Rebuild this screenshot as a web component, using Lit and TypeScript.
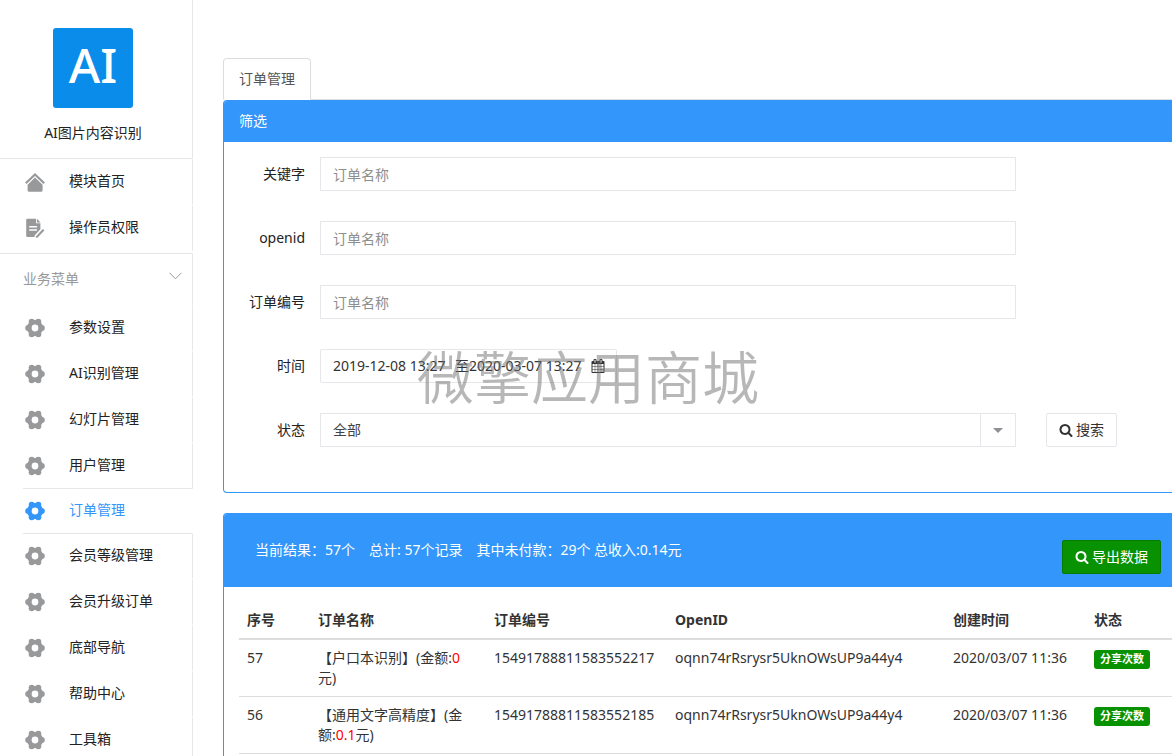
import { LitElement, html, css, svg } from "lit";
import { customElement } from "lit/decorators.js";
import { classMap } from "lit/directives/class-map.js";

const ICONS = {
  home: svg`<path d="M.8 11.200 10 2.400l9.200 8.800" fill="none" stroke="currentColor" stroke-width="2.200"/><path d="M10 5.600l7.600 7.200v5.400a1.600 1.600 0 0 1-1.600 1.600H4.200a1.600 1.600 0 0 1-1.600-1.600v-5.400z"/>`,
  doc: svg`<path fill-rule="evenodd" d="M2.500 .800h8.500v4.400h4.400v6l-5.800 6.200v1.600H2.500a1.300 1.300 0 0 1-1.300-1.300V2.100A1.300 1.300 0 0 1 2.500 .800zM4.200 8v1.400h7.800V8zM4.200 11.300v1.400h7.800v-1.400z"/><path d="M11.900 .800l3.600 3.600h-3.600z"/><path d="M10.400 19l7.400-8 1.600 1.500-7.300 7.500z"/>`,
  gear: svg`<circle cx="10" cy="10" r="5.700" fill="none" stroke="currentColor" stroke-width="4.600"/><circle cx="3.200" cy="10" r="3"/><circle cx="16.800" cy="10" r="3"/><circle cx="6.700" cy="3.800" r="3"/><circle cx="13.300" cy="3.800" r="3"/><circle cx="6.700" cy="16.200" r="3"/><circle cx="13.300" cy="16.200" r="3"/>`,
};

const searchIcon = html`<svg class="fa" viewBox="0 0 1792 1792" aria-hidden="true"><path d="M1216 832q0-185-131.500-316.500t-316.500-131.500-316.500 131.500-131.500 316.500 131.500 316.500 316.500 131.500 316.500-131.500 131.500-316.500zm512 832q0 52-38 90t-90 38q-54 0-90-38l-343-342q-179 124-399 124-143 0-273.500-55.500t-225-150-150-225-55.500-273.500 55.500-273.500 150-225 225-150 273.500-55.500 273.500 55.500 225 150 150 225 55.500 273.500q0 220-124 399l343 343q37 37 37 90z"/></svg>`;

const calendarIcon = html`<svg class="fa" viewBox="0 0 1792 1792" aria-hidden="true"><path d="M192 1664h288v-288h-288v288zm352 0h320v-288h-320v288zm-352-352h288v-320h-288v320zm352 0h320v-320h-320v320zm-352-384h288v-288h-288v288zm736 736h320v-288h-320v288zm-384-736h320v-288h-320v288zm768 736h288v-288h-288v288zm-384-352h320v-320h-320v320zm-352-864v-288q0-13-9.500-22.500t-22.500-9.500h-64q-13 0-22.500 9.500t-9.500 22.500v288q0 13 9.500 22.500t22.500 9.500h64q13 0 22.500-9.500t9.500-22.500zm736 864h288v-320h-288v320zm-384-384h320v-288h-320v288zm384 0h288v-288h-288v288zm32-480v-288q0-13-9.500-22.500t-22.500-9.500h-64q-13 0-22.500 9.500t-9.500 22.500v288q0 13 9.500 22.500t22.500 9.500h64q13 0 22.500-9.500t9.500-22.500zm384-64v1280q0 52-38 90t-90 38h-1408q-52 0-90-38t-38-90v-1280q0-52 38-90t90-38h128v-96q0-66 47-113t113-47h64q66 0 113 47t47 113v96h384v-96q0-66 47-113t113-47h64q66 0 113 47t47 113v96h128q52 0 90 38t38 90z"/></svg>`;

interface MenuItem {
  label: string;
  icon: keyof typeof ICONS;
  active?: boolean;
}

interface Order {
  id: number;
  name: string;
  amount: string;
  orderNo: string;
  openid: string;
  created: string;
}

const TOP_MENU: MenuItem[] = [
  { label: "模块首页", icon: "home" },
  { label: "操作员权限", icon: "doc" },
];

const BUSINESS_MENU: MenuItem[] = [
  { label: "参数设置", icon: "gear" },
  { label: "AI识别管理", icon: "gear" },
  { label: "幻灯片管理", icon: "gear" },
  { label: "用户管理", icon: "gear" },
  { label: "订单管理", icon: "gear", active: true },
  { label: "会员等级管理", icon: "gear" },
  { label: "会员升级订单", icon: "gear" },
  { label: "底部导航", icon: "gear" },
  { label: "帮助中心", icon: "gear" },
  { label: "工具箱", icon: "gear" },
];

const ORDERS: Order[] = [
  { id: 57, name: "户口本识别", amount: "0", orderNo: "15491788811583552217", openid: "oqnn74rRsrysr5UknOWsUP9a44y4", created: "2020/03/07 11:36" },
  { id: 56, name: "通用文字高精度", amount: "0.1", orderNo: "15491788811583552185", openid: "oqnn74rRsrysr5UknOWsUP9a44y4", created: "2020/03/07 11:36" },
];

@customElement("side-menu")
class SideMenu extends LitElement {
  static styles = css`
    :host {
      display: block;
      flex: none;
      width: 193px;
      color: #222;
    }
    .brand {
      display: flex;
      flex-direction: column;
      align-items: center;
      box-sizing: border-box;
      padding: 28px 6px 15px 0;
      border-right: 1px solid #e7e7e7;
      border-bottom: 1px solid #e7e7e7;
    }
    .logo {
      width: 80px;
      height: 80px;
      border-radius: 3px;
      background: #0a8cea;
      color: #fff;
      font-size: 48px;
      font-weight: 500;
      line-height: 74px;
      text-align: center;
    }
    .brand-name {
      margin-top: 15px;
      line-height: 20px;
    }
    .group {
      border-bottom: 1px solid #e7e7e7;
      padding-bottom: 2px;
    }
    .item {
      display: flex;
      align-items: center;
      box-sizing: border-box;
      height: 46px;
      padding-left: 25px;
      gap: 24px;
      border: 1px solid transparent;
      border-width: 1px 1px 1px 0;
      border-right-color: #e7e7e7;
      color: inherit;
      text-decoration: none;
    }
    .item span {
      line-height: 20px;
      padding-bottom: 2px;
    }
    .icon {
      width: 20px;
      height: 20px;
      fill: currentColor;
      color: #98999b;
    }
    .item.active {
      position: relative;
      margin: -1px 0 -1px 23px;
      padding-left: 2px;
      border-color: #e7e7e7;
      border-right-color: transparent;
      color: #3296fa;
    }
    .active .icon {
      color: #3296fa;
    }
    .section {
      display: flex;
      align-items: center;
      justify-content: space-between;
      box-sizing: border-box;
      width: 100%;
      height: 51px;
      padding: 0 10px 2px 23px;
      border: 0;
      border-right: 1px solid #e7e7e7;
      background: none;
      color: #999;
      font: inherit;
    }
    .chevron {
      width: 13px;
      height: 8px;
      margin-bottom: 5px;
      fill: none;
      stroke: #999;
    }
  `;

  private renderItem(item: MenuItem) {
    return html`<a href="#" class=${classMap({ item: true, active: !!item.active })}>
      <svg class="icon" viewBox="0 0 20 20" aria-hidden="true">${ICONS[item.icon]}</svg>
      <span>${item.label}</span>
    </a>`;
  }

  render() {
    return html`
      <div class="brand">
        <div class="logo">AI</div>
        <div class="brand-name">AI图片内容识别</div>
      </div>
      <nav>
        <div class="group">${TOP_MENU.map((i) => this.renderItem(i))}</div>
        <button class="section" type="button">
          业务菜单
          <svg class="chevron" viewBox="0 0 13 8" aria-hidden="true"><path d="M.5 .8l6 6 6-6" /></svg>
        </button>
        ${BUSINESS_MENU.map((i) => this.renderItem(i))}
      </nav>
    `;
  }
}

@customElement("app-root")
class AppRoot extends LitElement {
  static styles = css`
    :host {
      display: flex;
      height: 100vh;
      overflow: hidden;
      background: #fff;
      color: #333;
      font: 14px/20px "Noto Sans", "Noto Sans CJK SC", sans-serif;
    }
    main {
      flex: 1;
      min-width: 0;
      padding: 58px 0 0 30px;
    }
    .tabs {
      display: flex;
      border-bottom: 1px solid #ddd;
    }
    .tab {
      margin-bottom: -1px;
      padding: 10px 15px;
      border: 1px solid #ddd;
      border-bottom-color: #fff;
      border-radius: 4px 4px 0 0;
      background: #fff;
      color: #555;
      text-decoration: none;
    }
    .panel {
      margin-bottom: 20px;
      border: 1px solid #3296fa;
      border-right: 0;
      border-radius: 4px 0 0 4px;
      overflow: hidden;
    }
    .panel-head {
      padding: 10px 15px 11px;
      background: #3296fa;
      color: #fff;
    }
    .filters {
      position: relative;
      padding: 15px 0 0 15px;
    }
    .row {
      display: grid;
      grid-template-columns: 66px minmax(0, 1fr) 126px;
      margin-bottom: 30px;
    }
    .row:last-of-type {
      margin-bottom: 45px;
    }
    .row label {
      padding: 7px 0;
      text-align: right;
      color: #222;
    }
    .field {
      margin: 0 30px 0 15px;
    }
    .control {
      box-sizing: border-box;
      display: block;
      width: 100%;
      height: 34px;
      padding: 0 12px;
      border: 1px solid #e7e7eb;
      border-radius: 0;
      background: #fff;
      color: #444;
      font: inherit;
      appearance: none;
      outline: 0;
    }
    .control::placeholder {
      color: #8e8e8e;
      opacity: 1;
    }
    .btn {
      display: inline-flex;
      align-items: center;
      box-sizing: border-box;
      height: 34px;
      padding: 0 12px;
      gap: 3px;
      border: 1px solid #e7e7eb;
      border-radius: 2px;
      background: #fff;
      color: #333;
      font: inherit;
      white-space: nowrap;
      justify-self: start;
    }
    .btn.range {
      min-width: 297px;
      padding-right: 11px;
      justify-content: space-between;
    }
    .btn.export {
      border-color: #077a00;
      background: #089100;
      color: #fff;
    }
    .fa {
      flex: none;
      width: 14px;
      height: 14px;
      fill: currentColor;
    }
    .select {
      position: relative;
    }
    .arrow {
      position: absolute;
      top: 0;
      right: 0;
      display: flex;
      align-items: center;
      justify-content: center;
      box-sizing: border-box;
      width: 36px;
      height: 34px;
      border: 1px solid #e7e7eb;
      pointer-events: none;
    }
    .arrow svg {
      width: 10px;
      height: 5px;
      fill: #8f9094;
    }
    .watermark {
      position: absolute;
      left: 193px;
      top: 205px;
      color: rgba(112, 112, 112, 0.5);
      font-size: 57px;
      line-height: 60px;
      font-weight: 350;
      white-space: nowrap;
      pointer-events: none;
    }
    .summary {
      display: flex;
      gap: 14px;
      align-items: flex-start;
      padding: 26px 11px 13px 31px;
      background: #3296fa;
      color: #fff;
    }
    .summary .btn {
      margin-left: auto;
    }
    .table-wrap {
      padding: 15px 0 15px 15px;
    }
    table {
      width: 100%;
      table-layout: fixed;
      border-collapse: separate;
      border-spacing: 0;
    }
    .c-id { width: 71px; }
    .c-name { width: 176px; }
    .c-no { width: 181px; }
    .c-open { width: 278px; }
    .c-time { width: 141px; }
    th,
    td {
      padding: 8px;
      text-align: left;
      vertical-align: top;
    }
    th {
      border-bottom: 2px solid #ddd;
    }
    td {
      border-bottom: 1px solid #ddd;
    }
    .amount {
      color: #f00;
    }
    .tag {
      display: inline-block;
      margin-top: 2px;
      padding: 0 6px 1px;
      border-radius: 3px;
      background: #089100;
      color: #fff;
      font-size: 11px;
      font-weight: 700;
      line-height: 18px;
      vertical-align: top;
    }
  `;

  private renderInput(id: string, label: string) {
    return html`<div class="row">
      <label for=${id}>${label}</label>
      <div class="field"><input class="control" id=${id} type="text" placeholder="订单名称" /></div>
    </div>`;
  }

  private renderOrder(o: Order) {
    return html`<tr>
      <td>${o.id}</td>
      <td>【${o.name}】(金额:<span class="amount">${o.amount}</span>元)</td>
      <td>${o.orderNo}</td>
      <td>${o.openid}</td>
      <td>${o.created}</td>
      <td><span class="tag">分享次数</span></td>
    </tr>`;
  }

  render() {
    return html`
      <side-menu></side-menu>
      <main>
        <div class="tabs"><a class="tab" href="#">订单管理</a></div>
        <section class="panel">
          <div class="panel-head">筛选</div>
          <form class="filters">
            ${this.renderInput("keyword", "关键字")}
            ${this.renderInput("openid", "openid")}
            ${this.renderInput("order-no", "订单编号")}
            <div class="row">
              <label for="range">时间</label>
              <div class="field">
                <button class="btn range" id="range" type="button"><span>2019-12-08 13:27</span><span>至2020-03-07 13:27</span>${calendarIcon}</button>
              </div>
            </div>
            <div class="row">
              <label for="status">状态</label>
              <div class="field select">
                <select class="control" id="status"><option>全部</option></select>
                <span class="arrow"><svg viewBox="0 0 10 5" aria-hidden="true"><path d="M0 0h10L5 5z" /></svg></span>
              </div>
              <button class="btn" type="button">${searchIcon}搜索</button>
            </div>
            <span class="watermark">微擎应用商城</span>
          </form>
        </section>
        <section class="panel">
          <div class="summary">
            <span>当前结果：57个</span>
            <span>总计: 57个记录</span>
            <span>其中未付款：29个 总收入:0.14元</span>
            <button class="btn export" type="button">${searchIcon}导出数据</button>
          </div>
          <div class="table-wrap">
            <table>
              <colgroup>
                <col class="c-id" /><col class="c-name" /><col class="c-no" /><col class="c-open" /><col class="c-time" /><col />
              </colgroup>
              <thead>
                <tr><th>序号</th><th>订单名称</th><th>订单编号</th><th>OpenID</th><th>创建时间</th><th>状态</th></tr>
              </thead>
              <tbody>${ORDERS.map((o) => this.renderOrder(o))}</tbody>
            </table>
          </div>
        </section>
      </main>
    `;
  }
}
